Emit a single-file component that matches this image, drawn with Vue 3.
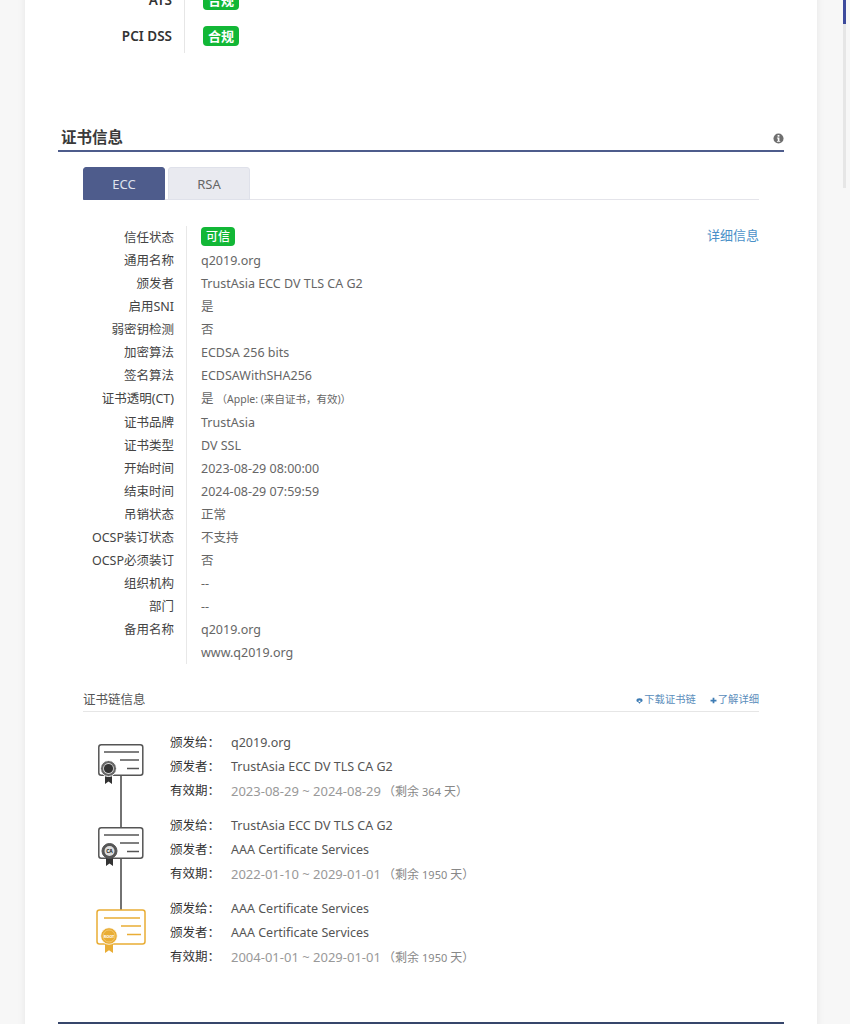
<script setup>
const compliance = ["ATS", "PCI DSS"];

const certRows = [
  { label: "信任状态", badge: "可信" },
  { label: "通用名称", value: "q2019.org" },
  { label: "颁发者", value: "TrustAsia ECC DV TLS CA G2" },
  { label: "启用SNI", value: "是" },
  { label: "弱密钥检测", value: "否" },
  { label: "加密算法", value: "ECDSA 256 bits" },
  { label: "签名算法", value: "ECDSAWithSHA256" },
  { label: "证书透明(CT)", value: "是", note: "（Apple: (来自证书，有效)）" },
  { label: "证书品牌", value: "TrustAsia" },
  { label: "证书类型", value: "DV SSL" },
  { label: "开始时间", value: "2023-08-29 08:00:00" },
  { label: "结束时间", value: "2024-08-29 07:59:59" },
  { label: "吊销状态", value: "正常" },
  { label: "OCSP装订状态", value: "不支持" },
  { label: "OCSP必须装订", value: "否" },
  { label: "组织机构", value: "--" },
  { label: "部门", value: "--" },
  { label: "备用名称", value: "q2019.org" },
  { label: "", value: "www.q2019.org" },
];

const chain = [
  {
    to: "q2019.org",
    by: "TrustAsia ECC DV TLS CA G2",
    range: "2023-08-29 ~ 2024-08-29",
    left: "364",
  },
  {
    to: "TrustAsia ECC DV TLS CA G2",
    by: "AAA Certificate Services",
    range: "2022-01-10 ~ 2029-01-01",
    left: "1950",
  },
  {
    to: "AAA Certificate Services",
    by: "AAA Certificate Services",
    range: "2004-01-01 ~ 2029-01-01",
    left: "1950",
  },
];
</script>

<template>
  <div class="page">
    <main class="card">
      <section class="compliance">
        <div v-for="name in compliance" :key="name" class="compliance-row">
          <div class="compliance-label">{{ name }}</div>
          <div class="compliance-value"><span class="badge">合规</span></div>
        </div>
      </section>

      <header class="section-head">
        <h2>证书信息</h2>
        <svg class="info-icon" viewBox="0 0 12 12" width="11" height="11">
          <circle cx="6" cy="6" r="5.5" fill="#6f6f6f" />
          <rect x="5" y="2.2" width="2" height="1.8" fill="#fff" />
          <path d="M4.3 5h2.7v3.6h.9v1H4.3v-1h.9V6h-.9z" fill="#fff" />
        </svg>
      </header>

      <div class="cert-body">
        <nav class="tabs">
          <button type="button" class="tab active">ECC</button>
          <button type="button" class="tab">RSA</button>
        </nav>

        <div class="cert-table">
          <a class="detail-link">详细信息</a>
          <div v-for="(row, i) in certRows" :key="i" class="cert-row">
            <div class="cert-label">{{ row.label }}</div>
            <div class="cert-value">
              <span v-if="row.badge" class="badge small">{{ row.badge }}</span>
              <template v-else>{{ row.value }}</template>
              <span v-if="row.note" class="note">{{ row.note }}</span>
            </div>
          </div>
        </div>

        <div class="chain-head">
          <h3>证书链信息</h3>
          <div class="chain-links">
            <a>
              <svg viewBox="0 0 8 8" width="7" height="7">
                <path d="M0.5 4a3.5 2.6 0 0 1 7 0c0 1-.6 1.6-1.5 1.6H5V4H3v1.6H2C1.100 5.600.5 5 .5 4z" fill="#3e7cb4" />
                <path d="M2.400 5.800h3.200L4 7.800z" fill="#3e7cb4" />
              </svg>下载证书链
            </a>
            <a>
              <svg viewBox="0 0 8 8" width="7" height="7">
                <path d="M3 .8h2V3h2.400v2H5v2.200H3V5H.6V3H3z" fill="#3e7cb4" />
              </svg>了解详细
            </a>
          </div>
        </div>

        <div class="chain">
          <svg class="chain-art" viewBox="0 0 70 224" width="70" height="224">
            <path d="M38 35v52M38 118v52" stroke="#444" stroke-width="1.500" />

            <rect x="15.800" y="4.800" width="44" height="30.500" rx="2.500" fill="#fff" stroke="#555" stroke-width="1.500" />
            <path d="M21 12h35M37 20h19M44 28.500h12" stroke="#555" stroke-width="1.300" />
            <path d="M22 34v10l3.500-2.500 3.500 2.500V34z" fill="#333" />
            <circle cx="25.500" cy="28.500" r="8" fill="#666" stroke="#fff" stroke-width="1" />
            <circle cx="25.500" cy="28.500" r="5.400" fill="#ddd" />
            <circle cx="25.500" cy="28.500" r="4.600" fill="#333" />

            <rect x="15.800" y="87.800" width="44" height="30.500" rx="2.500" fill="#fff" stroke="#555" stroke-width="1.500" />
            <path d="M21 95h35M37 103h19M44 111.500h12" stroke="#555" stroke-width="1.300" />
            <path d="M23 117v9l3.500-2.500 3.500 2.500v-9z" fill="#333" />
            <circle cx="26.500" cy="111" r="7.500" fill="#555" stroke="#555" stroke-width="1" />
            <circle cx="26.500" cy="111" r="5" fill="#ddd" />
            <text x="26.500" y="113" class="seal-text" fill="#222">CA</text>

            <rect x="14" y="170" width="48" height="34" rx="2.500" fill="#fff" stroke="#e9ad35" stroke-width="1.500" />
            <path d="M21 178h36M38 186h20M44 194.500h14" stroke="#e9ad35" stroke-width="1.300" />
            <path d="M22 202v11l4-2.800 4 2.800v-11z" fill="#e9ad35" />
            <circle cx="26" cy="196" r="8.300" fill="#e9ad35" stroke="#fff" stroke-width=".8" />
            <circle cx="26" cy="196" r="6" fill="none" stroke="#f6d58e" stroke-width=".6" />
            <text x="26" y="197.500" class="seal-text root" fill="#fff">ROOT</text>
          </svg>

          <div class="chain-list">
            <dl v-for="item in chain" :key="item.to + item.range" class="chain-item">
              <div class="chain-line"><dt>颁发给：</dt><dd>{{ item.to }}</dd></div>
              <div class="chain-line"><dt>颁发者：</dt><dd>{{ item.by }}</dd></div>
              <div class="chain-line">
                <dt>有效期：</dt>
                <dd class="muted">{{ item.range }}<span class="remain">（剩余 <small>{{ item.left }}</small> 天）</span></dd>
              </div>
            </dl>
          </div>
        </div>
      </div>

      <div class="next-section"></div>
    </main>

    <aside class="side-rail"><span class="rail-thumb"></span></aside>
  </div>
</template>

<style>
html,
body {
  margin: 0;
  height: 100%;
  overflow: hidden;
  background: #f7f7f7;
}
</style>

<style scoped>
.page {
  display: flex;
  height: 1024px;
  overflow: hidden;
  background: #f7f7f7;
  font-family: "Noto Sans", "Noto Sans CJK SC", sans-serif;
  color: #555;
}

.card {
  width: 792px;
  height: 1060px;
  margin: -18px 0 0 25px;
  padding: 0 33px;
  box-sizing: border-box;
  flex: none;
  background: #fff;
  box-shadow: 0 0 8px rgba(0, 0, 0, 0.07);
}

.compliance {
  width: 400px;
}

.compliance-row {
  display: flex;
  height: 36px;
  align-items: stretch;
}

.compliance-row:last-child {
  height: 35px;
}

.compliance-label {
  width: 126px;
  padding-right: 12px;
  box-sizing: border-box;
  text-align: right;
  font-size: 13.500px;
  font-weight: 600;
  line-height: 36px;
  color: #333;
  flex: none;
}

.compliance-value {
  display: flex;
  align-items: center;
  padding-left: 18px;
  border-left: 1px solid #e6e6e6;
}

.badge {
  display: inline-block;
  width: 36px;
  height: 20px;
  border-radius: 4px;
  background: #12b736;
  color: #fff;
  font-size: 13px;
  font-weight: 700;
  line-height: 20px;
  text-align: center;
}

.badge.small {
  display: block;
  width: 34px;
  height: 19px;
  margin-top: 1px;
  line-height: 19px;
  font-weight: 500;
  font-size: 12px;
}

.section-head {
  display: flex;
  align-items: center;
  justify-content: space-between;
  height: 27px;
  margin-top: 64px;
  padding: 6px 0 0 3px;
  border-bottom: 2px solid #4e5c8c;
}

.section-head h2 {
  margin: 0;
  font-size: 15.500px;
  font-weight: 700;
  color: #3a3a3a;
}

.info-icon {
  margin-top: 4px;
}

.cert-body {
  padding: 15px 25px 0;
}

.tabs {
  display: flex;
  gap: 3px;
  height: 32px;
  border-bottom: 1px solid #e4e4ea;
}

.tab {
  width: 82px;
  height: 33px;
  padding: 0;
  box-sizing: border-box;
  border: 1px solid #dfe1ea;
  border-radius: 3px 3px 0 0;
  background: #e9eaf0;
  color: #666;
  font: inherit;
  font-size: 13px;
}

.tab.active {
  border-color: #4e5c8c;
  background: #4e5c8c;
  color: #dfe3ee;
}

.cert-table {
  position: relative;
  margin-top: 26px;
}

.detail-link {
  position: absolute;
  top: -1px;
  right: 0;
  font-size: 13px;
  line-height: 20px;
  color: #4a90c8;
}

.cert-row {
  display: flex;
  height: 23px;
  font-size: 12.500px;
  line-height: 23px;
}

.cert-label {
  width: 91px;
  padding-right: 12px;
  flex: none;
  text-align: right;
  white-space: nowrap;
  color: #444;
}

.cert-value {
  padding-left: 14px;
  border-left: 1px solid #e8e8e8;
  color: #666;
  flex: 1;
  white-space: nowrap;
}

.cert-row:nth-child(9),
.cert-row:nth-child(10) {
  height: 23.500px;
}

.note {
  margin-left: 3px;
  font-size: 10.500px;
}

.chain-head {
  display: flex;
  align-items: center;
  justify-content: space-between;
  height: 25px;
  margin-top: 22px;
  border-bottom: 1px solid #e6e6e6;
}

.chain-head h3 {
  margin: 0;
  font-size: 12.500px;
  font-weight: 400;
  color: #555;
}

.chain-links {
  display: flex;
  gap: 14px;
  font-size: 10.300px;
  color: #5a8dbb;
}

.chain-links a {
  display: flex;
  align-items: center;
  gap: 1px;
}

.chain-links svg {
  margin-top: 3px;
}

.chain {
  display: flex;
  padding-top: 19px;
}

.chain-art {
  flex: none;
  width: 70px;
  margin: 9px 0 0;
}

.seal-text {
  font-size: 5px;
  font-weight: 700;
  text-anchor: middle;
}

.seal-text.root {
  font-size: 3.800px;
}

.chain-list {
  margin-left: 17px;
}

.chain-item {
  margin: 0 0 11px;
}

.chain-line {
  display: flex;
  height: 24px;
  font-size: 12.500px;
  line-height: 24px;
}

.chain-line dt {
  width: 61px;
  color: #333;
  flex: none;
}

.chain-line dd {
  margin: 0;
  color: #555;
  white-space: nowrap;
}

.chain-line dd.muted {
  font-size: 13px;
  color: #999;
}

.remain {
  margin-left: 2px;
  font-size: 12px;
  color: #888;
}

.remain small {
  font-size: 11px;
}

.next-section {
  height: 2px;
  margin-top: 42px;
  background: #36466b;
}

.side-rail {
  flex: none;
  width: 3px;
  height: 188px;
  margin-left: 26px;
  background: #e6e6e6;
}

.rail-thumb {
  display: block;
  height: 24px;
  background: #3d4a9c;
}
</style>
